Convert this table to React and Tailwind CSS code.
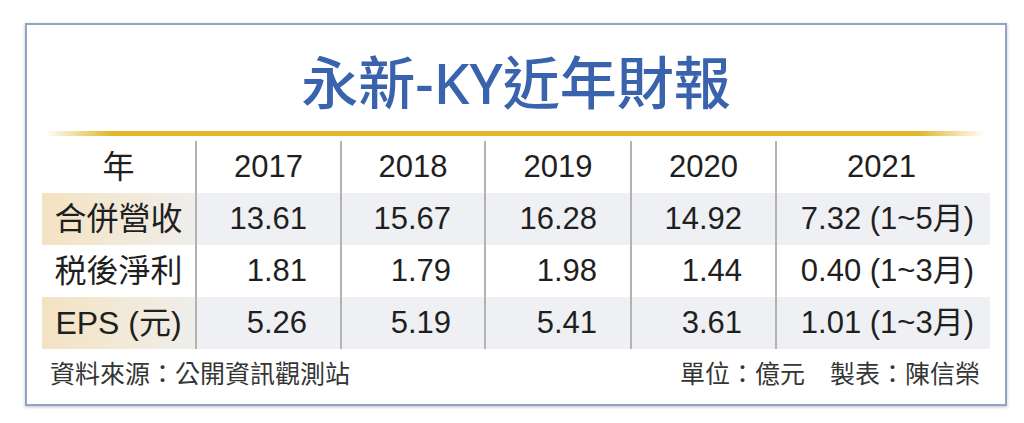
import React from 'react';

const rows = [
  { label: '合併營收', values: ['13.61', '15.67', '16.28', '14.92'], last: '7.32 (1~5月)', shaded: true },
  { label: '税後淨利', values: ['1.81', '1.79', '1.98', '1.44'], last: '0.40 (1~3月)', shaded: false },
  { label: 'EPS (元)', values: ['5.26', '5.19', '5.41', '3.61'], last: '1.01 (1~3月)', shaded: true },
];

const years = ['2017', '2018', '2019', '2020'];

const font = { fontFamily: '"Liberation Sans", "Noto Sans CJK TC", sans-serif' };

export default function App() {
  return (
    <div className="w-[1024px] h-[423px] bg-white pt-[23px] pl-[25px]" style={font}>
      <div className="w-[982px] h-[383px] border-2 border-[#93a5c5] shadow-[0_1px_3px_rgba(0,0,0,0.25)] flex flex-col">
        {/* Title */}
        <div className="h-[106px] flex items-center justify-center pt-[8px]">
          <h1
            className="text-[57px] leading-none font-medium text-[#3a63ad]"
            style={{ fontFamily: '"Noto Sans", "Noto Sans CJK TC", sans-serif' }}
          >
            永新-KY近年財報
          </h1>
        </div>

        {/* Gold rule */}
        <div className="ml-[18px] w-[940px] h-[5px] bg-[linear-gradient(to_right,rgba(226,184,44,0),#e1b72c_7%,#e1b72c_93%,rgba(226,184,44,0))]" />

        {/* Table */}
        <div className="mt-[5px] ml-[15px] grid grid-cols-[153px_145px_144px_146px_145px_215px] text-[#1f1f1f]">
          {/* Header */}
          <div className="h-[52px] flex items-center justify-center text-[32px]">年</div>
          {years.map((y) => (
            <div key={y} className="h-[52px] flex items-center justify-center text-[31px] border-l-2 border-[#b3b3b3]">{y}</div>
          ))}
          <div className="h-[52px] flex items-center justify-center text-[31px] border-l-2 border-[#b3b3b3] pr-[4px]">2021</div>

          {rows.map((r) => (
            <React.Fragment key={r.label}>
              <div
                className={`h-[52px] flex items-center justify-center text-[32px] ${
                  r.shaded ? 'bg-linear-to-r from-[#f4e3c2] to-[#efeeeb]' : ''
                }`}
              >
                {r.label}
              </div>
              {r.values.map((v, i) => (
                <div
                  key={i}
                  className={`h-[52px] flex items-center justify-end pr-[33px] text-[31px] border-l-2 border-[#b3b3b3] ${
                    r.shaded ? 'bg-[#eef0f3]' : ''
                  }`}
                >
                  {v}
                </div>
              ))}
              <div
                className={`h-[52px] flex items-center justify-end pr-[16px] text-[31px] border-l-2 border-[#b3b3b3] ${
                  r.shaded ? 'bg-[#eef0f3]' : ''
                }`}
              >
                {r.last}
              </div>
            </React.Fragment>
          ))}
        </div>

        {/* Footer */}
        <div className="flex-1 flex items-center justify-between pl-[23px] pr-[25px] pb-[4px] text-[25px] text-[#353535]">
          <span>資料來源：公開資訊觀測站</span>
          <span>單位：億元　製表：陳信榮</span>
        </div>
      </div>
    </div>
  );
}
